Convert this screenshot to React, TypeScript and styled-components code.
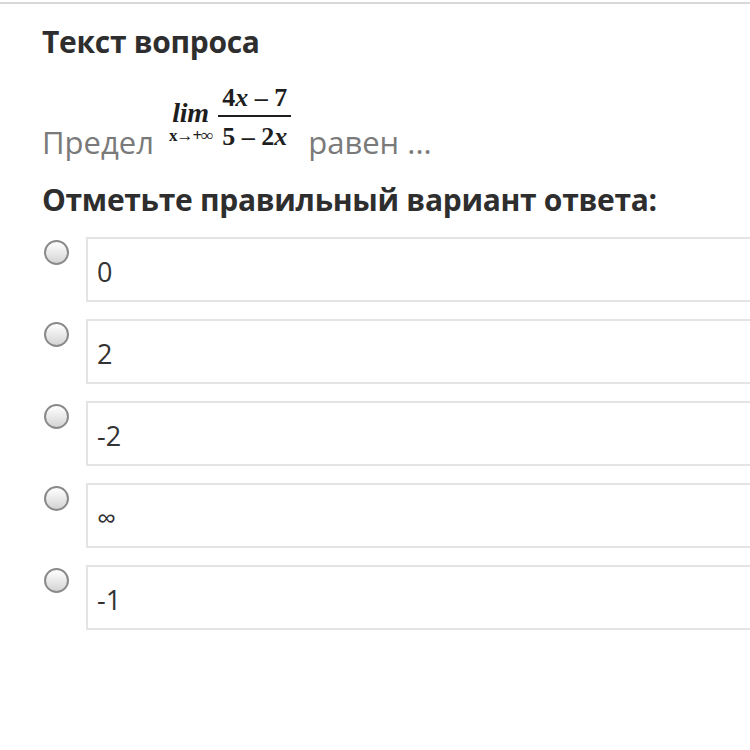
import React from 'react';
import styled, { createGlobalStyle } from 'styled-components';

const GlobalStyle = createGlobalStyle`
  html, body {
    margin: 0;
    padding: 0;
    background: #ffffff;
    overflow-x: hidden;
  }
  body {
    font-family: "Open Sans", "Noto Sans", sans-serif;
    color: #333333;
  }
`;

const Page = styled.div`
  border-top: 2px solid #d9d9d9;
  margin-top: 2px;
  padding: 18px 0 0 42px;
  min-height: 740px;
  box-sizing: border-box;
`;

const Heading = styled.h2`
  margin: 0;
  font-size: 30px;
  font-weight: 700;
  line-height: 40px;
  color: #2e2e2e;
  letter-spacing: -0.3px;
`;

const QuestionLine = styled.div`
  display: flex;
  align-items: flex-end;
  margin-top: 23px;
  font-size: 31px;
  line-height: 40px;
  color: #7a7a7a;
`;

const Word = styled.span``;

// formula picture: lim over x→+∞ and a stacked fraction
const Formula = styled.span`
  display: inline-flex;
  align-items: flex-start;
  margin: 0 17px 12px 15px;
  font-family: "Liberation Serif", "Times New Roman", serif;
  font-weight: 700;
  color: #1e1e1e;
  line-height: 1;
`;

const LimBlock = styled.span`
  display: inline-flex;
  flex-direction: column;
  align-items: center;
  margin-top: 14px;
  margin-right: 6px;
`;

const Lim = styled.span`
  font-style: italic;
  font-size: 28px;
  letter-spacing: -0.3px;
`;

const LimSub = styled.span`
  font-size: 17px;
  letter-spacing: -1px;
`;

const Fraction = styled.span`
  display: inline-flex;
  flex-direction: column;
  align-items: center;
`;

const Numerator = styled.span`
  font-size: 26px;
  padding: 0 4px 4px;
  border-bottom: 2px solid #1e1e1e;
`;

const Denominator = styled.span`
  font-size: 26px;
  padding: 7px 4px 0;
`;

const Var = styled.i``;

const Prompt = styled.h3`
  margin: 18px 0 0;
  font-size: 30px;
  font-weight: 700;
  line-height: 40px;
  color: #2e2e2e;
  letter-spacing: -0.3px;
`;

const OptionList = styled.div`
  display: flex;
  flex-direction: column;
  gap: 17px;
  margin-top: 17px;
  margin-right: -20px;
`;

const OptionRow = styled.label`
  display: flex;
  align-items: flex-start;
  gap: 17px;
`;

const Radio = styled.span`
  flex: none;
  width: 21px;
  height: 21px;
  margin: 3px 0 0 2px;
  border-radius: 50%;
  border: 2px solid #8a8a8a;
  background: linear-gradient(#ffffff, #d4d4d4);
`;

const AnswerBox = styled.div`
  flex: 1;
  height: 65px;
  box-sizing: border-box;
  border: 2px solid #e4e4e4;
  padding: 15px 0 0 9px;
  font-size: 27px;
  line-height: 36px;
  color: #333333;
`;

const options = ['0', '2', '-2', '∞', '-1'];

const App: React.FC = () => {
  return (
    <>
      <GlobalStyle />
      <Page>
        <Heading>Текст вопроса</Heading>
        <QuestionLine>
          <Word>Предел</Word>
          <Formula>
            <LimBlock>
              <Lim>lim</Lim>
              <LimSub>x→+∞</LimSub>
            </LimBlock>
            <Fraction>
              <Numerator>
                4<Var>x</Var> – 7
              </Numerator>
              <Denominator>
                5 – 2<Var>x</Var>
              </Denominator>
            </Fraction>
          </Formula>
          <Word>равен ...</Word>
        </QuestionLine>
        <Prompt>Отметьте правильный вариант ответа:</Prompt>
        <OptionList>
          {options.map((opt, i) => (
            <OptionRow key={i}>
              <Radio />
              <AnswerBox>{opt}</AnswerBox>
            </OptionRow>
          ))}
        </OptionList>
      </Page>
    </>
  );
};

export default App;
